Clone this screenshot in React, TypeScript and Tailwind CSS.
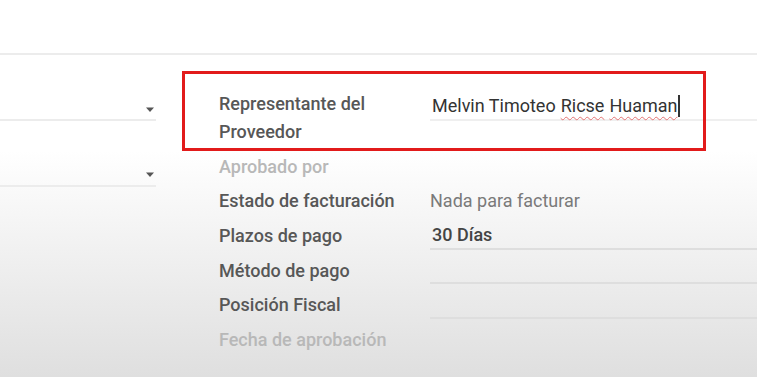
import React from "react";

const rows = [
  { label: "Aprobado por", muted: true, value: null, line: false },
  { label: "Estado de facturación", value: "Nada para facturar", line: false, valueTone: "text-[#7a7a7a]" },
  { label: "Plazos de pago", value: "30 Días", line: true, valueTone: "text-[#444] font-medium" },
  { label: "Método de pago", value: "", line: true },
  { label: "Posición Fiscal", value: "", line: true },
  { label: "Fecha de aprobación", muted: true, value: null, line: false },
];

function Caret() {
  return (
    <svg width="10" height="6" viewBox="0 0 10 6" className="fill-[#555]">
      <path d="M1 0.5 L9 0.5 L5 5 Z" />
    </svg>
  );
}

export default function App() {
  return (
    <div
      className="relative h-[377px] w-[757px] overflow-hidden bg-gradient-to-b from-white from-40% to-[#dfdfdf] text-[18px]"
      style={{ fontFamily: "Roboto, 'Liberation Sans', sans-serif" }}
    >
      {/* ===== top bar ===== */}
      <div className="h-[53px]" />
      <div className="h-[2px] bg-[#ececec]" />

      <div className="flex">
        {/* ===== left dropdowns ===== */}
        <div className="w-[156px] pt-[46px]">
          <div className="flex h-[20px] items-center justify-end border-b-2 border-[#ececec] pr-[1px]">
            <Caret />
          </div>
          <div className="mt-[44px] flex h-[22px] items-center justify-end border-b-2 border-[#ececec] pr-[1px]">
            <Caret />
          </div>
        </div>

        {/* ===== right form ===== */}
        <div className="ml-[63px] flex-1 pt-[35px]">
          <div className="flex">
            <div className="w-[211px] font-medium leading-[28px] text-[#575757]">
              Representante del
              <br />
              Proveedor
            </div>
            <div className="flex-1">
              <div className="flex h-[31px] items-center border-b-2 border-[#efefef] pl-[2px] pt-[2px] text-[#333]">
                Melvin Timoteo{" "}
                <span className="ml-[5px] underline decoration-wavy decoration-[#e57373] decoration-1 underline-offset-4">
                  Ricse
                </span>
                <span className="ml-[5px] underline decoration-wavy decoration-[#e57373] decoration-1 underline-offset-4">
                  Huaman
                </span>
                <span className="ml-[1px] h-[22px] w-[2px] bg-[#333]" />
              </div>
            </div>
          </div>

          <div className="mt-[3px]">
            {rows.map((r, i) => (
              <div key={i} className="flex h-[34.6px]">
                <div
                  className={`flex w-[211px] items-center font-medium ${
                    r.muted ? "text-[#b8b8b8]" : "text-[#575757]"
                  }`}
                >
                  {r.label}
                </div>
                {r.value !== null && (
                  <div className="flex-1 pb-[3px]">
                    <div
                      className={`flex h-full items-center ${
                        r.line ? "border-b-2 border-[#dedede]" : ""
                      } ${r.valueTone ?? ""} ${r.value === "30 Días" ? "pl-[2px] pt-[4px]" : "pt-[3px]"}`}
                    >
                      {r.value}
                    </div>
                  </div>
                )}
              </div>
            ))}
          </div>
        </div>
      </div>

      {/* ===== highlight annotation ===== */}
      <div className="absolute left-[182px] top-[71px] h-[80px] w-[524px] border-[3px] border-[#e21b1b]" />
    </div>
  );
}
